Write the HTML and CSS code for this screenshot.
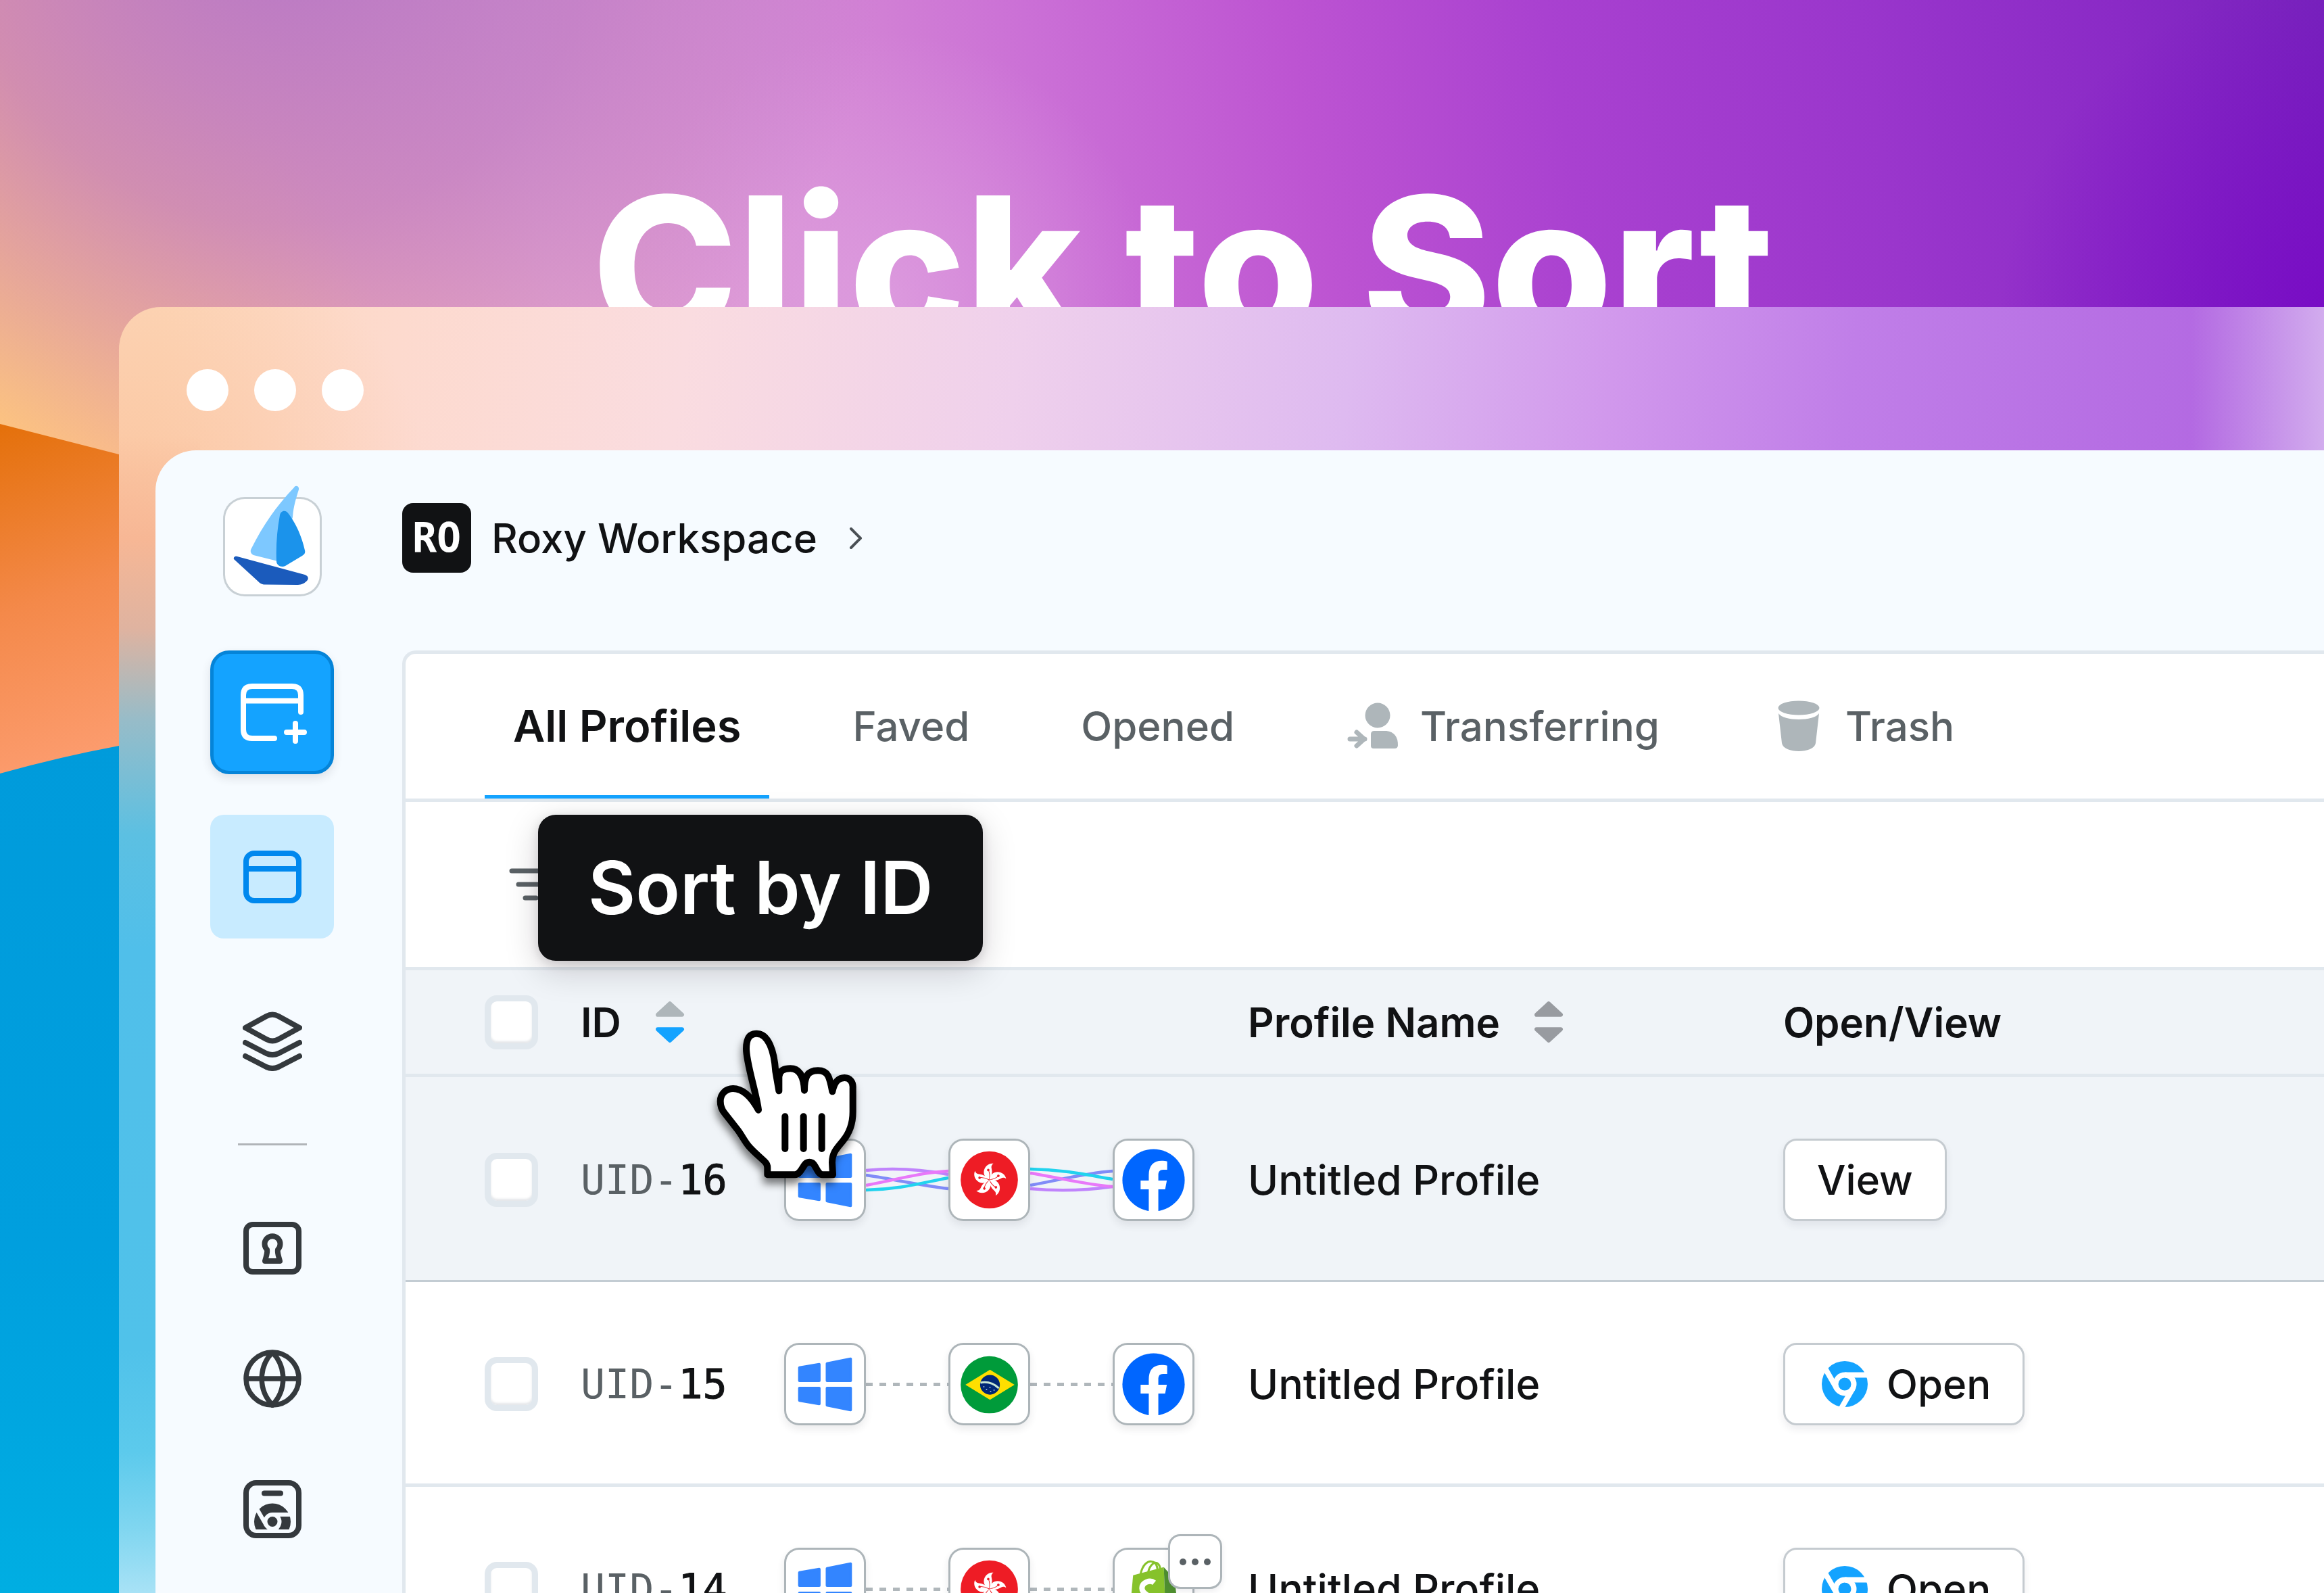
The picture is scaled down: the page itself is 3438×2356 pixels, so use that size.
FILE: index.html
```html
<!DOCTYPE html>
<html lang="en">

<head>
    <meta charset="utf-8">
    <title>Click to Sort</title>
    <meta name="viewport" content="width=device-width, initial-scale=1">
    <link rel="stylesheet" href="styles.css">
</head>

<body>
    <svg class="wallpaper" viewBox="0 0 3438 2356" preserveAspectRatio="none" aria-hidden="true">
        <defs>
            <linearGradient id="orange" x1="0" y1="0" x2="0.25" y2="1">
                <stop offset="0" stop-color="#e4700a" />
                <stop offset="0.5" stop-color="#f4894a" />
                <stop offset="1" stop-color="#fd9e72" />
            </linearGradient>
            <linearGradient id="blue" x1="0" y1="0" x2="0" y2="1">
                <stop offset="0" stop-color="#009bdb" />
                <stop offset="0.6" stop-color="#009fde" />
                <stop offset="1" stop-color="#00aee2" />
            </linearGradient>
        </defs>
        <path d="M0 627 L176 672 L400 730 L400 1150 L0 1160 Z" fill="url(#orange)" />
        <path d="M0 1144 Q90 1119 176 1103 L400 1070 L400 2356 L0 2356 Z" fill="url(#blue)" />
    </svg>

    <!-- shared icons -->
    <svg class="sprite" aria-hidden="true">
        <symbol id="sort-up" viewBox="0 0 43 24">
            <path d="M4 20 L21.5 4 L39 20 Z" stroke="currentColor" stroke-width="6" stroke-linejoin="round" fill="currentColor" />
        </symbol>
        <symbol id="sort-down" viewBox="0 0 43 24">
            <path d="M4 4 L21.5 20 L39 4 Z" stroke="currentColor" stroke-width="6" stroke-linejoin="round" fill="currentColor" />
        </symbol>
        <symbol id="windows" viewBox="0 0 120 120">
            <g fill="#3385ff" stroke="#3385ff" stroke-width="4" stroke-linejoin="round">
                <path d="M22.500 36 L51.500 31 V55 H22.500 Z" />
                <path d="M63 30 L97.500 23 V55 H63 Z" />
                <path d="M22.500 66 H51.500 V89 L22.500 84 Z" />
                <path d="M63 66 H97.500 V98 L63 91 Z" />
            </g>
        </symbol>
        <symbol id="hongkong" viewBox="0 0 120 120">
            <defs>
                <g id="petal">
                    <path d="M0 0 C-4 -2 -8 -6 -8 -11 C-8 -19 -1 -25 6 -24 C1 -20 4 -17 4 -12 C4 -7 2 -3 0 0 Z" fill="#fff" />
                    <path d="M0 0 C1 -5 1 -9 -1 -14" fill="none" stroke="#ee1c25" stroke-width="1" />
                    <circle cx="-1.500" cy="-14.500" r="1.800" fill="#ee1c25" />
                </g>
            </defs>
            <circle cx="60" cy="60" r="42" fill="#ee1c25" />
            <g transform="translate(60 60)">
                <use href="#petal" />
                <use href="#petal" transform="rotate(72)" />
                <use href="#petal" transform="rotate(144)" />
                <use href="#petal" transform="rotate(216)" />
                <use href="#petal" transform="rotate(288)" />
            </g>
        </symbol>
        <symbol id="brazil" viewBox="0 0 120 120">
            <circle cx="60" cy="61" r="42" fill="#009b3a" />
            <path d="M25 61 L61 39 L97 61 L61 83 Z" fill="#fedf00" />
            <circle cx="61" cy="61" r="14.500" fill="#002776" />
            <path d="M47 58 Q62 55 74 66" fill="none" stroke="#c8e6d4" stroke-width="3" />
            <g fill="#9fb4d8">
                <circle cx="52" cy="64" r="1" /><circle cx="56" cy="68" r="1" /><circle cx="61" cy="65" r="1" />
                <circle cx="62" cy="71" r="1" /><circle cx="67" cy="69" r="1" />
            </g>
        </symbol>
        <symbol id="facebook" viewBox="0 0 120 120">
            <circle cx="60" cy="60.500" r="45.700" fill="#0066ff" />
            <path d="M53 108 V74 H41 V61 H53 V53 C53 39 60 32 72 32 C75 32 78 32 80 33 V45 H74 C69 45 67 48 67 53 V61 H79.500 L77 74 H67 V108 Z" fill="#fff" />
        </symbol>
        <symbol id="shopify" viewBox="0 0 120 120">
            <path d="M41 38 C44 24 52 18 58 20 C65 21 66 31 66 36 M52 36 C54 26 60 20 65 22 C69 24 70 30 70 34" fill="none" stroke="#86c22b" stroke-width="3" />
            <path d="M30 40 L75 28 L78 104 L25 95 Z" fill="#86c22b" />
            <path d="M75 28 L83 37 L90 38 L97 99 L78 104 Z" fill="#4f9030" />
            <path d="M61 51 C55 46 43 50 43 59 C43 68 55 68 54 75 C53 82 43 79 38 75" fill="none" stroke="#fff" stroke-width="8" />
        </symbol>
        <symbol id="chrome" viewBox="-34 -34 68 68">
            <circle r="34" fill="#14a3ff" />
            <g fill="none" stroke="#fff" stroke-width="8">
                <circle r="13.500" />
                <path d="M0 -13.500 H40" />
                <path d="M0 -13.500 H40" transform="rotate(120)" />
                <path d="M0 -13.500 H40" transform="rotate(240)" />
            </g>
        </symbol>
    </svg>

    <header class="hero">
        <h1 class="hero-title">Click to Sort</h1>
    </header>

    <div class="window">
        <div class="window-bar">
            <span class="dot"></span>
            <span class="dot"></span>
            <span class="dot"></span>
        </div>

        <div class="app">
            <aside class="sidebar">
                <a class="logo" href="#" aria-label="Home">
                    <svg viewBox="0 -20 146 166" aria-hidden="true">
                        <path d="M105 -14 C107 -18 113 -16 112 -11 C108 2 104 14 103 30 L79 94.500 L45 86 C40 84 40 79 42 76 C58 44 78 14 105 -14 Z" fill="#7dc8ff" />
                        <path d="M84 27 C85 20 93 18 97 25 C108 40 116 57 121 79 C122 83 120 85 117 87 L92 102 C86 105 79 101 79 95 C78 72 80 48 84 27 Z" fill="#1b93eb" />
                        <path d="M16 92 C15 89 18 87 21 88 L121 115 C127 117 127 122 123 125 C119 129 114 130 109 130 L60 129.500 C56 129 54 127 52 125 Z" fill="#1b5bbc" />
                    </svg>
                </a>
                <nav class="side-nav">
                    <button class="side-btn side-create" aria-label="Create profile">
                        <svg width="98" height="90" viewBox="0 0 98 90" fill="none" stroke="currentColor" stroke-width="8" stroke-linecap="round">
                            <path d="M50 81 H17 Q4 81 4 68 V17 Q4 4 17 4 H76 Q89 4 89 17 V42" />
                            <path d="M4 25.500 H89" />
                            <path d="M81 59 V85 M68 72 H94" />
                        </svg>
                    </button>
                    <button class="side-btn side-active" aria-label="Profiles">
                        <svg width="86" height="78" viewBox="0 0 86 78" fill="none" stroke="currentColor" stroke-width="8">
                            <rect x="4" y="4" width="78" height="70" rx="12" />
                            <path d="M4 27 H82" />
                        </svg>
                    </button>
                    <button class="side-btn" aria-label="Groups">
                        <svg width="88" height="88" viewBox="0 0 88 88" fill="none" stroke="currentColor" stroke-width="8" stroke-linecap="round" stroke-linejoin="round">
                            <path d="M4 24 L35 7 Q44 2 53 7 L84 24 L53 41 Q44 46 35 41 Z" />
                            <path d="M4 46 L35 62 Q44 66 53 62 L84 46" />
                            <path d="M4 66 L35 82 Q44 86 53 82 L84 66" />
                        </svg>
                    </button>
                    <hr class="side-divider">
                    <div class="side-group">
                        <button class="side-btn" aria-label="Accounts">
                            <svg width="86" height="78" viewBox="0 0 86 78" fill="none" stroke="currentColor" stroke-width="8" stroke-linejoin="round">
                                <rect x="4" y="4" width="78" height="70" rx="10" />
                                <path d="M35 41 A11.500 11.500 0 1 1 51 41 C50 46 52 50 54 58 H32 C34 50 36 46 35 41 Z" />
                            </svg>
                        </button>
                        <button class="side-btn" aria-label="Proxies">
                            <svg width="86" height="86" viewBox="0 0 86 86" fill="none" stroke="currentColor" stroke-width="7.500">
                                <circle cx="43" cy="43" r="39" />
                                <path d="M4 43 H82 M43 4 C22 26 22 60 43 82 C64 60 64 26 43 4" />
                            </svg>
                        </button>
                        <button class="side-btn" aria-label="Extensions">
                            <svg width="86" height="86" viewBox="0 0 86 86" fill="none">
                                <clipPath id="half"><rect x="0" y="0" width="86" height="73" /></clipPath>
                                <rect x="4" y="4" width="78" height="78" rx="15" stroke="currentColor" stroke-width="8" />
                                <path d="M31 19.500 H55" stroke="currentColor" stroke-width="8" stroke-linecap="round" />
                                <g clip-path="url(#half)">
                                    <circle cx="43" cy="61.500" r="27" fill="currentColor" />
                                    <g transform="translate(43 61.500)" stroke="#f6fbff" stroke-width="6">
                                        <circle r="10.500" />
                                        <path d="M0 -10.500 H32" />
                                        <path d="M0 -10.500 H32" transform="rotate(120)" />
                                        <path d="M0 -10.500 H32" transform="rotate(240)" />
                                    </g>
                                </g>
                            </svg>
                        </button>
                    </div>
                </nav>
            </aside>

            <main class="main">
                <a class="workspace" href="#">
                    <span class="workspace-badge">RO</span>
                    <span>Roxy Workspace</span>
                    <svg class="chevron" width="24" height="36" viewBox="0 0 24 36" fill="none" stroke="currentColor" stroke-width="4" stroke-linecap="round" stroke-linejoin="round" aria-hidden="true">
                        <path d="M4 4 L18 18 L4 32" />
                    </svg>
                </a>

                <section class="panel">
                    <nav class="tabs">
                        <a class="tab tab-active" href="#">All Profiles</a>
                        <a class="tab" href="#">Faved</a>
                        <a class="tab" href="#">Opened</a>
                        <a class="tab" href="#">
                            <svg width="82" height="82" viewBox="0 0 82 82" fill="#aeb6ba" aria-hidden="true">
                                <circle cx="47" cy="25" r="18.500" />
                                <path d="M37 53 Q37 48 42 48 H60 Q77 50 77 69 Q77 74 72 74 H41 Q37 74 37 70 Z" />
                                <path d="M6 60 H28 M16 50 L27 60 L16 70" fill="none" stroke="#aeb6ba" stroke-width="7" stroke-linecap="round" stroke-linejoin="round" />
                            </svg>
                            Transferring
                        </a>
                        <a class="tab" href="#">
                            <svg width="82" height="82" viewBox="0 0 82 82" fill="#aeb6ba" aria-hidden="true">
                                <ellipse cx="41" cy="14" rx="30.500" ry="10.500" />
                                <path d="M11 22 C18 34 64 34 71 22 L66 66 C64 82 18 82 16 66 Z" />
                            </svg>
                            Trash
                        </a>
                    </nav>

                    <div class="toolbar">
                        <button class="filter-btn" aria-label="Filter">
                            <svg width="64" height="48" viewBox="0 0 64 48" stroke="currentColor" stroke-width="7" stroke-linecap="round" aria-hidden="true">
                                <path d="M4 4 H60 M14 24 H50 M24 44 H40" />
                            </svg>
                        </button>
                    </div>

                    <table class="profiles">
                        <colgroup>
                            <col class="col-check">
                            <col class="col-id">
                            <col class="col-flow">
                            <col class="col-name">
                            <col>
                        </colgroup>
                        <thead>
                            <tr>
                                <th><input class="check" type="checkbox" aria-label="Select all"></th>
                                <th>
                                    <button class="sort-btn">ID
                                        <span class="sort-arrows">
                                            <svg class="arrow"><use href="#sort-up" /></svg>
                                            <svg class="arrow arrow-on"><use href="#sort-down" /></svg>
                                        </span>
                                    </button>
                                </th>
                                <th></th>
                                <th>
                                    <button class="sort-btn">Profile Name
                                        <span class="sort-arrows sort-idle">
                                            <svg class="arrow"><use href="#sort-up" /></svg>
                                            <svg class="arrow"><use href="#sort-down" /></svg>
                                        </span>
                                    </button>
                                </th>
                                <th>Open/View</th>
                            </tr>
                        </thead>
                        <tbody>
                            <tr class="row-running">
                                <td><input class="check" type="checkbox" aria-label="Select UID-16"></td>
                                <td class="uid">UID-<span class="uid-num">16</span></td>
                                <td>
                                    <div class="flow">
                                        <span class="chip"><svg><use href="#windows" /></svg></span>
                                        <svg class="wires" viewBox="0 0 122 40" preserveAspectRatio="none" fill="none" stroke-width="4.500" aria-hidden="true">
                                            <path d="M0 13 C30 17 80 28 122 33" stroke="#818cf8" />
                                            <path d="M0 6 C50 1 90 6 122 12" stroke="#c084fc" />
                                            <path d="M0 28 C40 21 80 9 122 7" stroke="#e879f9" />
                                            <path d="M0 35 C50 34 80 25 122 17" stroke="#22d3ee" />
                                        </svg>
                                        <span class="chip"><svg><use href="#hongkong" /></svg></span>
                                        <svg class="wires" viewBox="0 0 122 40" preserveAspectRatio="none" fill="none" stroke-width="4.500" aria-hidden="true">
                                            <path d="M0 28 C40 21 80 10 122 7" stroke="#818cf8" />
                                            <path d="M0 33 C40 37 80 36 122 30" stroke="#c084fc" />
                                            <path d="M0 4 C50 5 80 12 122 19" stroke="#22d3ee" />
                                            <path d="M0 10 C40 16 80 27 122 30" stroke="#e879f9" />
                                        </svg>
                                        <span class="chip"><svg><use href="#facebook" /></svg></span>
                                    </div>
                                </td>
                                <td class="name">Untitled Profile</td>
                                <td><button class="action action-view">View</button></td>
                            </tr>
                            <tr>
                                <td><input class="check" type="checkbox" aria-label="Select UID-15"></td>
                                <td class="uid">UID-<span class="uid-num">15</span></td>
                                <td>
                                    <div class="flow">
                                        <span class="chip"><svg><use href="#windows" /></svg></span>
                                        <span class="dashes"></span>
                                        <span class="chip"><svg><use href="#brazil" /></svg></span>
                                        <span class="dashes"></span>
                                        <span class="chip"><svg><use href="#facebook" /></svg></span>
                                    </div>
                                </td>
                                <td class="name">Untitled Profile</td>
                                <td><button class="action"><svg class="action-icon"><use href="#chrome" /></svg>Open</button></td>
                            </tr>
                            <tr>
                                <td><input class="check" type="checkbox" aria-label="Select UID-14"></td>
                                <td class="uid">UID-<span class="uid-num">14</span></td>
                                <td>
                                    <div class="flow">
                                        <span class="chip"><svg><use href="#windows" /></svg></span>
                                        <span class="dashes"></span>
                                        <span class="chip"><svg><use href="#hongkong" /></svg></span>
                                        <span class="dashes"></span>
                                        <span class="chip">
                                            <svg><use href="#shopify" /></svg>
                                            <button class="more" aria-label="More platforms">
                                                <svg width="46" height="10" viewBox="0 0 46 10" fill="currentColor">
                                                    <circle cx="5" cy="5" r="5" /><circle cx="23" cy="5" r="5" /><circle cx="41" cy="5" r="5" />
                                                </svg>
                                            </button>
                                        </span>
                                    </div>
                                </td>
                                <td class="name">Untitled Profile</td>
                                <td><button class="action"><svg class="action-icon"><use href="#chrome" /></svg>Open</button></td>
                            </tr>
                        </tbody>
                    </table>

                    <div class="tooltip" role="tooltip">Sort by ID</div>

                    <svg class="cursor" viewBox="0 0 780 780" stroke="#000" stroke-width="30" stroke-linecap="round" stroke-linejoin="round" aria-hidden="true">
                        <path fill="#fff" d="M286 709 V678 Q286 662 275 652 C250 628 225 608 205 585 C183 560 172 532 150 505 L95 435 C80 416 77 400 77 383 C77 350 102 327 133 327 C175 327 215 365 246 422 C238 350 192 215 192 150 C192 108 205 83 238 83 C290 83 316 160 322 250 L337 337 V275 C337 246 362 238 388 238 C430 238 447 275 450 335 C450 275 462 247 510 247 C555 247 562 275 574 340 C585 290 605 279 628 279 C652 279 667 298 665 325 V430 C665 480 650 525 620 560 C590 595 573 615 573 655 L576 709 H530 C508 708 500 665 485 657 Q472 650 459 657 C444 665 434 708 408 709 Z" />
                        <path fill="none" d="M364 451 V594 M446 451 V594 M527 451 V594" />
                    </svg>
                </section>
            </main>
        </div>
    </div>
</body>

</html>
```
FILE: styles.css
```css
* {
    box-sizing: border-box;
}

body {
    margin: 0;
    height: 100vh;
    overflow: hidden;
    display: flex;
    flex-direction: column;
    position: relative;
    font-family: Inter, "Liberation Sans", sans-serif;
    font-size: 60px;
    font-weight: 500;
    color: #111214;
    background:
        radial-gradient(circle at 12% -6%, rgba(176, 112, 200, 0.9) 0, rgba(180, 112, 196, 0.6) 12%, rgba(190, 112, 190, 0) 23%),
        radial-gradient(circle at 0 26%, #ffc67e 0, rgba(255, 190, 140, 0) 15%),
        radial-gradient(circle at 38% 19%, rgba(226, 168, 228, 0.6) 0, rgba(226, 168, 228, 0) 14%),
        radial-gradient(circle at 101% 20%, rgba(120, 8, 198, 0.9) 0, rgba(120, 8, 198, 0) 13%),
        linear-gradient(80deg, #ffb890 9%, #f8b4ae 20%, #e6a6cc 30%, #d68cd4 40%, #cb70d6 50%, #bd54d2 60%, #a941d0 70%, #9a36cc 82%, #8a2ac6 92%, #7421ba 101%);
}

a {
    color: inherit;
    text-decoration: none;
}

button {
    font: inherit;
    color: inherit;
    background: none;
    border: none;
    padding: 0;
    cursor: pointer;
}

.wallpaper {
    position: absolute;
    inset: 0;
    width: 100%;
    height: 100%;
}

.sprite {
    position: absolute;
    width: 0;
    height: 0;
}

/* headline, cut off by the window below it */
.hero {
    position: relative;
    flex: none;
    height: 454px;
    overflow: hidden;
    padding: 250px 0 0 62px;
    text-align: center;
}

.hero-title {
    margin: 0;
    font-size: 290px;
    line-height: 1;
    font-weight: 800;
    color: #fff;
}

.window {
    position: relative;
    flex: 1;
    min-height: 0;
    display: flex;
    flex-direction: column;
    margin-left: 176px;
    padding-left: 54px;
    border-top-left-radius: 62px;
    background:
        linear-gradient(180deg, rgba(247, 183, 149, 0) 10%, #f7b795 18%, #dfb3a0 25%, #98bcc8 32%, #5cc0e2 41%, #50bfea 50%, #50c2ea 81%, #5ccaec 89%, #80d6f0 95%, #a8e2f6 100%) 0 0 / 120px 100% no-repeat,
        linear-gradient(90deg, rgba(208, 170, 236, 0) 94%, #d2acee 100%),
        radial-gradient(circle at 0 300px, rgba(250, 190, 150, 0.7) 0, rgba(250, 190, 150, 0) 460px),
        linear-gradient(98deg, #fdd8ba 2%, #fddace 12%, #fadce0 24%, #efd0ec 38%, #debaf0 52%, #d198ec 63%, #c07ee8 73%, #b369e2 88%, #b066e0 100%);
}

.window-bar {
    display: flex;
    flex: none;
    gap: 38px;
    height: 212px;
    padding: 92px 46px 0;
}

.dot {
    width: 62px;
    height: 62px;
    border-radius: 50%;
    background: #fff;
}

.app {
    flex: 1;
    display: flex;
    min-height: 0;
    background: #f6fbff;
    border-top-left-radius: 60px;
    overflow: hidden;
}

/* sidebar */
.sidebar {
    flex: none;
    width: 365px;
    padding: 69px 101px 0 81px;
    display: flex;
    flex-direction: column;
    align-items: center;
    gap: 80px;
}

.logo {
    width: 146px;
    height: 147px;
    flex: none;
    border-radius: 32px;
    background: #fff;
    box-shadow: inset 0 0 0 3px #c8d0d5;
}

.logo svg {
    display: block;
    width: 146px;
    height: 166px;
    margin-top: -20px;
}

.side-nav,
.side-group {
    display: flex;
    flex-direction: column;
    align-items: center;
    gap: 60px;
}

.side-group {
    gap: 10px;
}

.side-btn {
    width: 183px;
    height: 183px;
    flex: none;
    display: flex;
    align-items: center;
    justify-content: center;
    border-radius: 20px;
    color: #34393d;
}

.side-create {
    color: #fff;
    background: #14a3ff;
    border: 5px solid #0584d8;
    border-radius: 28px;
    padding: 4px 0 0 4px;
    box-shadow: 0 6px 14px rgba(40, 40, 60, 0.12);
}

.side-active {
    color: #0088ee;
    background: #c8ebff;
}

.side-divider {
    width: 102px;
    height: 3px;
    margin: 0;
    border: none;
    background: #b0b4b8;
}

/* main area */
.main {
    flex: 1;
    min-width: 0;
    padding-top: 78px;
    display: flex;
    flex-direction: column;
    align-items: stretch;
    gap: 115px;
}

.workspace {
    display: flex;
    flex: none;
    align-items: center;
    gap: 30px;
}

.workspace-badge {
    width: 102px;
    height: 103px;
    border-radius: 16px;
    background: #111214;
    color: #fff;
    font-family: "DejaVu Sans Mono", monospace;
    font-weight: 700;
    line-height: 103px;
    text-align: center;
}

.chevron {
    margin-left: 16px;
    color: #4a5055;
}

.panel {
    position: relative;
    flex: 1;
    min-height: 0;
    background: #fff;
    border-top: 5px solid #e1e8ee;
    border-left: 5px solid #e1e8ee;
    border-top-left-radius: 20px;
}

.tabs {
    display: flex;
    gap: 81px;
    height: 219px;
    padding-left: 117px;
    border-bottom: 5px solid #e1e8ee;
}

.tab {
    display: flex;
    align-items: center;
    gap: 28px;
    padding: 4px 42px 0;
    color: #5a6165;
    border-bottom: 5px solid transparent;
}

.tab-active {
    font-size: 65px;
    font-weight: 600;
    color: #111214;
    border-bottom-color: #14a3ff;
}

.toolbar {
    display: flex;
    align-items: center;
    height: 249px;
    padding-left: 153px;
    border-bottom: 5px solid #e1e8ee;
}

.filter-btn {
    display: flex;
    color: #5a6165;
}

/* profiles table */
.profiles {
    width: 100%;
    table-layout: fixed;
    border-collapse: separate;
    border-spacing: 0;
}

.col-check { width: 259px; }
.col-id { width: 301px; }
.col-flow { width: 686px; }
.col-name { width: 792px; }

.profiles th,
.profiles td {
    padding: 0;
    text-align: left;
    vertical-align: middle;
    white-space: nowrap;
}

.profiles th {
    height: 158px;
    font-weight: 600;
    background: #f0f4f8;
    border-bottom: 5px solid #e1e8ee;
}

.profiles td {
    height: 303px;
    padding-top: 4px;
    border-bottom: 5px solid #e1e8ee;
}

.profiles .row-running td {
    background: #f0f4f8;
    border-bottom: 3px solid #c3ccd3;
}

.profiles .name {
    font-size: 61px;
}

.check {
    appearance: none;
    display: block;
    width: 79px;
    height: 80px;
    margin: 0 0 0 117px;
    border: 9px solid #e1e8ee;
    border-radius: 18px;
    background: #fff;
    background-clip: padding-box;
    box-shadow: inset 0 -3px 3px rgba(150, 160, 170, 0.25);
}

.sort-btn {
    display: flex;
    align-items: center;
    gap: 50px;
}

.sort-arrows {
    display: flex;
    flex-direction: column;
    gap: 13px;
    color: #aeb6ba;
}

.sort-idle {
    color: #989ba0;
}

.arrow {
    display: block;
    width: 44px;
    height: 25px;
}

.arrow-on {
    color: #14a3ff;
}

.uid {
    font-family: "DejaVu Sans Mono", monospace;
    font-weight: 400;
    color: #5a6165;
}

.uid-num {
    color: #111214;
    -webkit-text-stroke: 1px #111214;
}

.flow {
    display: flex;
    align-items: center;
}

.chip {
    position: relative;
    width: 121px;
    height: 122px;
    flex: none;
    border-radius: 22px;
    background: #fff;
    box-shadow: inset 0 0 0 3px #adb5b9, 0 6px 12px rgba(40, 40, 60, 0.09);
}

.chip > svg {
    display: block;
    width: 121px;
    height: 122px;
}

.wires {
    width: 122px;
    height: 40px;
}

.dashes {
    width: 122px;
    height: 5px;
    background: repeating-linear-gradient(90deg, #b0b7bb 0, #b0b7bb 10px, transparent 10px, transparent 20px);
}

.more {
    position: absolute;
    top: -20px;
    right: -41px;
    width: 80px;
    height: 81px;
    display: flex;
    align-items: center;
    justify-content: center;
    color: #5a6165;
    background: #fff;
    border: 3px solid #adb5b9;
    border-radius: 18px;
    box-shadow: 0 4px 8px rgba(40, 40, 60, 0.08);
}

.action {
    display: flex;
    align-items: center;
    gap: 28px;
    height: 122px;
    padding: 0 47px 0 54px;
    background: #fff;
    border: 3px solid #c5cbd0;
    border-radius: 20px;
    box-shadow: 0 6px 12px rgba(40, 40, 60, 0.08);
}

.action-view {
    padding: 0 47px;
}

.action-icon {
    width: 68px;
    height: 68px;
}

/* overlays */
.tooltip {
    position: absolute;
    top: 238px;
    left: 196px;
    padding: 42px 74px;
    font-size: 108px;
    line-height: 132px;
    font-weight: 600;
    white-space: nowrap;
    color: #fff;
    background: #111214;
    border-radius: 26px;
    box-shadow: 0 14px 50px rgba(20, 10, 20, 0.18), 0 4px 16px rgba(20, 10, 20, 0.14);
}

.cursor {
    position: absolute;
    top: 534px;
    left: 440px;
    width: 260px;
    height: 260px;
    fill: none;
    filter: drop-shadow(-2px 9px 6px rgba(0, 0, 0, 0.5));
}
```
